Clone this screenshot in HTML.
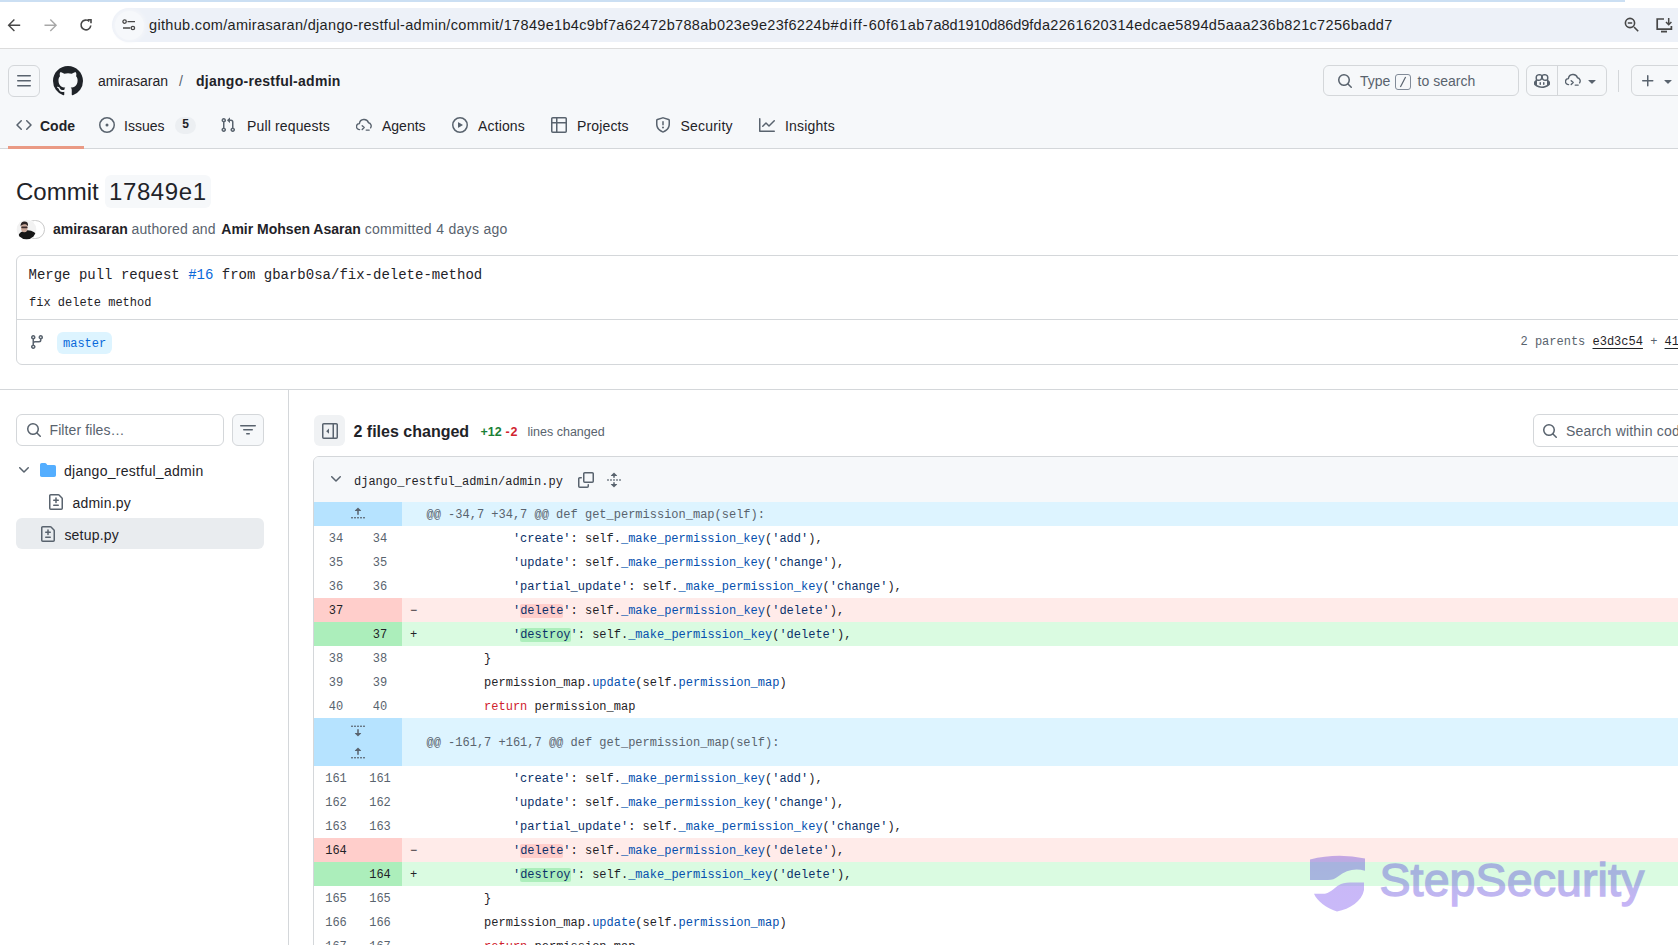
<!DOCTYPE html>
<html><head><meta charset="utf-8">
<style>
*{box-sizing:border-box;margin:0;padding:0}
html,body{width:1678px;height:945px;overflow:hidden;background:#fff;font-family:"Liberation Sans",sans-serif;color:#1f2328;position:relative}
.a{position:absolute;white-space:nowrap}
.mono{font-family:"Liberation Mono",monospace}
svg{display:block;position:absolute}
/* chrome */
#progress{left:0;top:0;width:1625px;height:2px;background:#cbdff3}
#omni{left:112px;top:8px;width:1600px;height:34px;border-radius:17px;background:#edf1f8}
#siteinfo{left:115px;top:10.5px;width:29px;height:29px;border-radius:15px;background:#f6f8fb;box-shadow:0 0 3px 2px #f3f5f9}
#url{left:149px;top:15px;font-size:14.5px;line-height:20px;color:#1f1f1f;letter-spacing:.325px}
#chromesep{left:0;top:48px;width:1678px;height:1px;background:#dcdcdc}
/* github header */
#ghhead{left:0;top:49px;width:1678px;height:100px;background:#f6f8fa;border-bottom:1px solid #d4d7da}
.btn{border:1px solid #d4d7da;border-radius:6px;background:#f6f8fa}
#hamb{left:8px;top:65px;width:32px;height:32px}
#owner{left:98px;top:72px;font-size:14px;line-height:18px;color:#1f2328}
#slash{left:179px;top:72px;font-size:14px;line-height:18px;color:#59636e}
#repo{left:196px;top:72px;font-size:14px;line-height:18px;font-weight:bold;color:#1f2328;letter-spacing:.27px}
.tab{top:117px;font-size:14px;line-height:18px;color:#1f2328}
#tabline{left:8px;top:146px;width:76px;height:2.5px;background:#ea9a84}
#counter{left:175px;top:117px;width:21px;height:17px;border-radius:9px;background:#eceff2;font-size:12px;line-height:14.5px;text-align:center;font-weight:bold;color:#1f2328}
#search{left:1323px;top:65px;width:196px;height:31px;border:1px solid #d4d7da;border-radius:6px;background:#f6f8fa}
#searchtxt{left:1360px;top:72px;font-size:14px;line-height:18px;color:#59636e}
#kbd{left:1395px;top:74px;width:16px;height:16px;border:1px solid #818b98;border-radius:3px}
#copbtn{left:1526px;top:65px;width:81px;height:31px}
#copdiv{left:1557px;top:66px;width:1px;height:29px;background:#d4d7da}
#vdiv{left:1618px;top:70px;width:1px;height:22px;background:#d4d7da}
#plusbtn{left:1631px;top:65px;width:60px;height:31px}
/* commit */
#ctitle{left:16px;top:177px;font-size:24px;line-height:30px;color:#1f2328}
#hashbox{left:105px;top:175px;width:106px;height:33px;border-radius:6px;background:#f6f8fa}
#hash{left:109px;top:177px;font-size:24px;line-height:30px;letter-spacing:.6px;color:#1f2328}
.meta{top:220px;font-size:14px;line-height:18px}
#msgbox{left:16px;top:255px;width:1700px;height:110px;border:1px solid #d4d7da;border-radius:6px}
#msgdiv{left:17px;top:319px;width:1700px;height:1px;background:#d4d7da}
#msg1{left:28.5px;top:266px;font-size:14px;line-height:18px}
#msg2{left:29px;top:294.5px;font-size:12px;line-height:16px}
#master{left:57px;top:332px;width:55px;height:22px;border-radius:6px;background:#ddf4ff}
#mastertxt{left:63px;top:335.5px;font-size:12px;line-height:16px;color:#0969da}
#parents{left:1520.5px;top:334px;font-size:12px;line-height:16px;color:#59636e}
#parents u{color:#1f2328;text-underline-offset:3px}
#sect{left:0;top:389px;width:1678px;height:1px;background:#d4d7da}
#sidediv{left:288px;top:390px;width:1px;height:560px;background:#d4d7da}
/* sidebar */
#filter{left:16px;top:414px;width:208px;height:32px;border:1px solid #d4d7da;border-radius:6px;background:#fff}
#filtertxt{left:49.5px;top:421px;font-size:14px;line-height:18px;color:#59636e;letter-spacing:.1px}
#filterbtn{left:232px;top:414px;width:32px;height:32px}
.tree{font-size:14px;line-height:18px;color:#1f2328}
#selrow{left:16px;top:518px;width:248px;height:31px;border-radius:6px;background:#e9ecef}
/* content */
#sidetoggle{left:314px;top:415px;width:31px;height:31px;border-radius:6px;background:#f0f2f4}
#fc{left:353.5px;top:422px;font-size:16px;line-height:20px;font-weight:bold}
#stats{left:480.5px;top:424px;font-size:12.5px;line-height:16px}
#searchcode{left:1533px;top:414px;width:200px;height:33px;border:1px solid #d4d7da;border-radius:6px}
#searchcodetxt{left:1566px;top:422px;font-size:14px;line-height:18px;color:#59636e;letter-spacing:.2px}
#filebox{left:313px;top:456px;width:1400px;height:600px;border:1px solid #d4d7da;border-radius:6px;overflow:hidden}
#fhead{left:0;top:0;width:1400px;height:46px;background:#f6f8fa;border-bottom:1px solid #d4d7da}
#fname{left:40px;top:17px;font-size:12px;line-height:16px}
/* diff */
#diff{left:0;top:45px;width:1400px}
.r{position:relative;height:24px;font-family:"Liberation Mono",monospace;font-size:12px;line-height:24px;white-space:pre;color:#1f2328}
.r .n1,.r .n2{position:absolute;top:0;width:44px;height:100%;text-align:center;color:#59636e;padding-top:1px}
.r .n1{left:0}.r .n2{left:44px}
.r .s{position:absolute;left:96px;top:1px}
.r .c{position:absolute;left:112.5px;top:1px}
.hk{background:#ddf4ff;color:#59636e}
.hk .n{position:absolute;left:0;top:0;width:88px;height:100%;background:#b6e3ff}
.del{background:#ffebe9}.del .n1,.del .n2{background:#ffcecb;color:#1f2328}
.add{background:#dafbe1}.add .n1,.add .n2{background:#aceebb;color:#1f2328}
.str{color:#0a3069}.fn{color:#0550ae}.kw{color:#cf222e}
.wd{background:#ffcecb;border-radius:2px}
.wa{background:#aceebb;border-radius:2px}
</style></head>
<body>
<!-- browser chrome -->
<div class="a" id="progress"></div>
<div class="a" id="omni"></div>
<svg style="left:7px;top:17.5px" width="15" height="15" viewBox="0 0 15 15"><path d="M13.2 7.2H1.8M7.4 1.4 1.6 7.2l5.8 5.8" fill="none" stroke="#474747" stroke-width="1.4"/></svg>
<svg style="left:42.5px;top:17.5px" width="15" height="15" viewBox="0 0 15 15"><path d="M1.5 7.2h11.4M7.3 1.4l5.8 5.8-5.8 5.8" fill="none" stroke="#a8a8a8" stroke-width="1.4"/></svg>
<svg style="left:79px;top:18px" width="14" height="14" viewBox="0 0 14 14"><path d="M11.8 7.5A4.9 4.9 0 1 1 10.3 3.4" fill="none" stroke="#474747" stroke-width="1.6"/><path d="M8.6 1.8h3.4v3.4" fill="none" stroke="#474747" stroke-width="1.6"/></svg>
<div class="a" id="siteinfo"></div>
<svg style="left:122px;top:19px" width="14" height="12" viewBox="0 0 14 12"><circle cx="2.6" cy="2.6" r="1.7" fill="none" stroke="#474747" stroke-width="1.3"/><path d="M5.5 2.6h7.5M1 9h7.3" stroke="#474747" stroke-width="1.3"/><circle cx="10.9" cy="9" r="1.7" fill="none" stroke="#474747" stroke-width="1.3"/></svg>
<div class="a" id="url">github.com/amirasaran/django-restful-admin/commit/17849e1b4c9bf7a62472b788ab023e9e23f6224b<span style="letter-spacing:1.05px">#diff-</span><span style="letter-spacing:.55px">60f61ab7</span><span style="letter-spacing:-.1px">a8d1910d86d9</span>fda2261620314edcae5894d5aaa236b821c7256badd7</div>
<svg style="left:1624px;top:17px" width="16" height="16" viewBox="0 0 16 16"><circle cx="6" cy="6" r="4.6" fill="none" stroke="#474747" stroke-width="1.6"/><path d="M10 10l4.2 4.2M3.8 6h4.4" stroke="#474747" stroke-width="1.6"/></svg>
<svg style="left:1655px;top:17px" width="18" height="16" viewBox="0 0 18 16"><path d="M9 2H2.2v10.2h14.2V9" fill="none" stroke="#474747" stroke-width="1.7"/><path d="M6 14.6h6" stroke="#474747" stroke-width="1.8"/><path d="M13.7 1v6.5M11 5l2.7 2.7L16.4 5" fill="none" stroke="#474747" stroke-width="1.5"/></svg>
<div class="a" id="chromesep"></div>

<!-- github header -->
<div class="a" id="ghhead"></div>
<div class="a btn" id="hamb"></div>
<svg style="left:16px;top:73px" width="16" height="16" viewBox="0 0 16 16" fill="#59636e"><path d="M1 2.75A.75.75 0 0 1 1.75 2h12.5a.75.75 0 0 1 0 1.5H1.75A.75.75 0 0 1 1 2.75Zm0 5A.75.75 0 0 1 1.75 7h12.5a.75.75 0 0 1 0 1.5H1.75A.75.75 0 0 1 1 7.75ZM1.75 12h12.5a.75.75 0 0 1 0 1.5H1.75a.75.75 0 0 1 0-1.5Z"/></svg>
<svg style="left:53px;top:66px" width="30" height="30" viewBox="0 0 16 16" fill="#1f2328"><path d="M8 0c4.42 0 8 3.58 8 8a8.013 8.013 0 0 1-5.45 7.59c-.4.08-.55-.17-.55-.38 0-.27.01-1.13.01-2.2 0-.75-.25-1.23-.54-1.48 1.78-.2 3.65-.88 3.65-3.95 0-.88-.31-1.59-.82-2.15.08-.2.36-1.02-.08-2.12 0 0-.67-.22-2.2.82-.64-.18-1.32-.27-2-.27-.68 0-1.36.09-2 .27-1.53-1.03-2.2-.82-2.2-.82-.44 1.1-.16 1.92-.08 2.12-.51.56-.82 1.28-.82 2.15 0 3.06 1.86 3.75 3.64 3.950-.23.2-.44.55-.51 1.07-.46.21-1.61.55-2.330-.66-.15-.24-.6-.83-1.23-.82-.67.01-.27.38.01.53.34.19.73.9.82 1.13.16.45.68 1.31 2.69.94 0 .67.01 1.3.01 1.49 0 .21-.15.45-.55.38A7.995 7.995 0 0 1 0 8c0-4.42 3.58-8 8-8Z"/></svg>
<div class="a" id="owner">amirasaran</div>
<div class="a" id="slash">/</div>
<div class="a" id="repo">django-restful-admin</div>

<svg style="left:16px;top:117px" width="16" height="16" viewBox="0 0 16 16" fill="#59636e"><path d="m11.28 3.22 4.25 4.25a.75.75 0 0 1 0 1.060l-4.25 4.25a.749.749 0 0 1-1.275-.326.749.749 0 0 1 .215-.734L13.94 8l-3.72-3.72a.749.749 0 0 1 .326-1.275.749.749 0 0 1 .734.215Zm-6.56 0a.751.751 0 0 1 1.042.018.751.751 0 0 1 .018 1.042L2.06 8l3.72 3.72a.749.749 0 0 1-.326 1.275.749.749 0 0 1-.734-.215L.47 8.53a.75.75 0 0 1 0-1.06Z"/></svg>
<div class="a tab" id="t_code" style="left:40px;font-weight:bold">Code</div>
<svg style="left:99px;top:117px" width="16" height="16" viewBox="0 0 16 16" fill="#59636e"><path d="M8 9.5a1.5 1.5 0 1 0 0-3 1.5 1.5 0 0 0 0 3Z"/><path d="M8 0a8 8 0 1 1 0 16A8 8 0 0 1 8 0ZM1.5 8a6.5 6.5 0 1 0 13 0 6.5 6.5 0 0 0-13 0Z"/></svg>
<div class="a tab" id="t_issues" style="left:124px">Issues</div>
<div class="a" id="counter">5</div>
<svg style="left:220px;top:117px" width="16" height="16" viewBox="0 0 16 16" fill="#59636e"><path d="M1.5 3.25a2.25 2.25 0 1 1 3 2.122v5.256a2.251 2.251 0 1 1-1.5 0V5.372A2.25 2.25 0 0 1 1.5 3.25Zm5.677-.177L9.573.677A.25.25 0 0 1 10 .854V2.5h1A2.5 2.5 0 0 1 13.5 5v5.628a2.251 2.251 0 1 1-1.5 0V5a1 1 0 0 0-1-1h-1v1.646a.25.25 0 0 1-.427.177L7.177 3.427a.25.25 0 0 1 0-.354ZM3.75 2.5a.75.75 0 1 0 0 1.5.75.75 0 0 0 0-1.5Zm0 9.5a.75.75 0 1 0 0 1.5.75.75 0 0 0 0-1.5Zm8.25.75a.75.75 0 1 0 1.5 0 .75.75 0 0 0-1.5 0Z"/></svg>
<div class="a tab" id="t_pr" style="left:247px;letter-spacing:.15px">Pull requests</div>
<svg style="left:356px;top:117px" width="16" height="16" viewBox="0 0 16 16" fill="none" stroke="#59636e" stroke-width="1.4" stroke-linecap="round" stroke-linejoin="round"><path d="M3.6 12.6A3 3 0 0 1 3.4 6.6 4.7 4.7 0 0 1 12.5 5.7 3.3 3.3 0 0 1 14.6 10.8"/><path d="M6.2 8.7l2 1.9-2 1.9M10.2 13.1h3"/></svg>
<div class="a tab" id="t_agents" style="left:382px">Agents</div>
<svg style="left:452px;top:117px" width="16" height="16" viewBox="0 0 16 16" fill="#59636e"><path d="M8 0a8 8 0 1 1 0 16A8 8 0 0 1 8 0ZM1.5 8a6.5 6.5 0 1 0 13 0 6.5 6.5 0 0 0-13 0Zm4.879-2.773 4.264 2.559a.25.25 0 0 1 0 .428l-4.264 2.559A.25.25 0 0 1 6 10.559V5.442a.25.25 0 0 1 .379-.215Z"/></svg>
<div class="a tab" id="t_actions" style="left:478px;letter-spacing:.15px">Actions</div>
<svg style="left:551px;top:117px" width="16" height="16" viewBox="0 0 16 16" fill="#59636e"><path d="M0 1.75C0 .784.784 0 1.75 0h12.5C15.216 0 16 .784 16 1.75v12.5A1.75 1.75 0 0 1 14.25 16H1.75A1.75 1.75 0 0 1 0 14.25ZM6.5 6.5v8h7.75a.25.25 0 0 0 .25-.25V6.5Zm8-1.5V1.75a.25.25 0 0 0-.25-.25H6.5V5Zm-13 1.5v7.75c0 .138.112.25.25.25H5v-8ZM5 5V1.5H1.75a.25.25 0 0 0-.25.25V5Z"/></svg>
<div class="a tab" id="t_projects" style="left:577px;letter-spacing:.15px">Projects</div>
<svg style="left:655px;top:117px" width="16" height="16" viewBox="0 0 16 16" fill="#59636e"><path d="M7.467.133a1.748 1.748 0 0 1 1.066 0l5.25 1.68A1.75 1.75 0 0 1 15 3.48V7c0 1.566-.32 3.182-1.303 4.682-.983 1.498-2.585 2.813-5.032 3.855a1.697 1.697 0 0 1-1.33 0c-2.447-1.042-4.049-2.357-5.032-3.855C1.32 10.182 1 8.566 1 7V3.48a1.755 1.755 0 0 1 1.217-1.667Zm.61 1.429a.25.25 0 0 0-.153 0l-5.25 1.68a.25.25 0 0 0-.174.238V7c0 1.358.275 2.666 1.057 3.86.784 1.194 2.121 2.340 4.366 3.297a.196.196 0 0 0 .154 0c2.245-.956 3.582-2.104 4.366-3.298C13.225 9.666 13.5 8.360 13.5 7V3.48a.251.251 0 0 0-.174-.237l-5.25-1.68ZM8.75 4.75v3a.75.75 0 0 1-1.5 0v-3a.75.75 0 0 1 1.5 0ZM9 10.5a1 1 0 1 1-2 0 1 1 0 0 1 2 0Z"/></svg>
<div class="a tab" id="t_security" style="left:680.5px;letter-spacing:.2px">Security</div>
<svg style="left:759px;top:117px" width="16" height="16" viewBox="0 0 16 16" fill="#59636e"><path d="M1.5 1.75V13.5h13.75a.75.75 0 0 1 0 1.5H.75a.75.75 0 0 1-.75-.75V1.75a.75.75 0 0 1 1.5 0Zm14.28 2.53-5.25 5.25a.75.75 0 0 1-1.06 0L7 7.060 4.280 9.780a.751.751 0 0 1-1.042-.018.751.751 0 0 1-.018-1.042l3.25-3.25a.75.75 0 0 1 1.06 0L10 7.94l4.72-4.72a.751.751 0 0 1 1.042.018.751.751 0 0 1 .018 1.042Z"/></svg>
<div class="a tab" id="t_insights" style="left:785px;letter-spacing:.2px">Insights</div>
<div class="a" id="tabline"></div>

<div class="a" id="search"></div>
<svg style="left:1337px;top:73px" width="16" height="16" viewBox="0 0 16 16" fill="#59636e"><path d="M10.68 11.74a6 6 0 0 1-7.922-8.982 6 6 0 0 1 8.982 7.922l3.04 3.04a.749.749 0 0 1-.326 1.275.749.749 0 0 1-.734-.215ZM11.5 7a4.499 4.499 0 1 0-8.997 0A4.499 4.499 0 0 0 11.5 7Z"/></svg>
<div class="a" id="searchtxt">Type&nbsp;&nbsp;&nbsp;&nbsp;&nbsp;&nbsp; to search</div>
<div class="a" id="kbd"></div>
<svg style="left:1396px;top:75px" width="14" height="14" viewBox="0 0 14 14"><path d="M9.6 2 4.4 12" stroke="#59636e" stroke-width="1.2"/></svg>
<div class="a btn" id="copbtn"></div>
<div class="a" id="copdiv"></div>
<svg style="left:1534px;top:73px" width="16" height="16" viewBox="0 0 16 16" fill="#59636e"><path d="M7.998 15.035c-4.562 0-7.873-2.914-7.998-3.749V9.338c.085-.628.677-1.686 1.588-2.065.013-.07.024-.143.036-.218.029-.183.06-.384.126-.612-.201-.508-.254-1.084-.254-1.656 0-.87.128-1.769.693-2.484.579-.733 1.494-1.124 2.724-1.261 1.206-.134 2.262.034 2.944.765.05.053.096.108.139.165.044-.057.094-.112.143-.165.682-.731 1.738-.899 2.944-.765 1.23.137 2.145.528 2.724 1.261.566.715.693 1.614.693 2.484 0 .572-.053 1.148-.254 1.656.066.228.098.429.126.612.012.076.024.148.037.218.924.385 1.522 1.471 1.591 2.095v1.872c0 .766-3.351 3.795-8.002 3.795Zm0-1.485c2.28 0 4.584-1.11 5.002-1.433V7.862l-.023-.116c-.49.21-1.075.291-1.727.291-1.146 0-2.059-.327-2.71-.991A3.222 3.222 0 0 1 8 6.303a3.24 3.24 0 0 1-.544.743c-.65.664-1.563.991-2.71.991-.652 0-1.236-.081-1.727-.291l-.023.116v4.255c.419.323 2.722 1.433 5.002 1.433ZM6.762 2.83c-.193-.206-.637-.413-1.682-.297-1.019.113-1.479.404-1.713.7-.247.312-.369.789-.369 1.554 0 .793.129 1.171.308 1.371.162.181.519.379 1.442.379.853 0 1.339-.235 1.638-.54.315-.322.527-.827.617-1.553.117-.935-.037-1.395-.241-1.614Zm4.155-.297c-1.044-.116-1.488.091-1.681.297-.204.219-.359.679-.242 1.614.091.726.303 1.231.618 1.553.299.305.784.54 1.638.54.922 0 1.28-.198 1.442-.379.179-.2.308-.578.308-1.371 0-.765-.123-1.242-.37-1.554-.233-.296-.693-.587-1.713-.7Z"/><path d="M6.25 9.037a.75.75 0 0 1 .75.75v1.501a.75.75 0 0 1-1.5 0V9.787a.75.75 0 0 1 .75-.75Zm4.25.75v1.501a.75.75 0 0 1-1.5 0V9.787a.75.75 0 0 1 1.5 0Z"/></svg>
<svg style="left:1565px;top:72px" width="16" height="16" viewBox="0 0 16 16" fill="none" stroke="#59636e" stroke-width="1.4" stroke-linecap="round" stroke-linejoin="round"><path d="M3.6 12.6A3 3 0 0 1 3.4 6.6 4.7 4.7 0 0 1 12.5 5.7 3.3 3.3 0 0 1 14.6 10.8"/><path d="M6.2 8.7l2 1.9-2 1.9M10.2 13.1h3"/></svg>
<svg style="left:1584px;top:73px" width="16" height="16" viewBox="0 0 16 16" fill="#59636e"><path d="m4.427 7.427 3.396 3.396a.25.25 0 0 0 .354 0l3.396-3.396A.25.25 0 0 0 11.396 7H4.604a.25.25 0 0 0-.177.427Z"/></svg>
<div class="a" id="vdiv"></div>
<div class="a btn" id="plusbtn"></div>
<svg style="left:1640px;top:73px" width="16" height="16" viewBox="0 0 16 16" fill="#59636e"><path d="M7.75 2a.75.75 0 0 1 .75.75V7h4.25a.75.75 0 0 1 0 1.5H8.5v4.25a.75.75 0 0 1-1.5 0V8.5H2.75a.75.75 0 0 1 0-1.5H7V2.75A.75.75 0 0 1 7.75 2Z"/></svg>
<svg style="left:1660px;top:73px" width="16" height="16" viewBox="0 0 16 16" fill="#59636e"><path d="m4.427 7.427 3.396 3.396a.25.25 0 0 0 .354 0l3.396-3.396A.25.25 0 0 0 11.396 7H4.604a.25.25 0 0 0-.177.427Z"/></svg>

<!-- commit header -->
<div class="a" id="hashbox"></div>
<div class="a" id="ctitle">Commit</div>
<div class="a" id="hash">17849e1</div>
<div class="a" style="left:25px;top:219.5px;width:19.5px;height:19.5px;border-radius:50%;background:#fff;border:1.6px solid #c9c9c9"></div>
<svg style="left:15.5px;top:219px" width="21" height="21" viewBox="0 0 21 21"><defs><clipPath id="av"><circle cx="10.5" cy="10.5" r="9.8"/></clipPath></defs><circle cx="10.5" cy="10.5" r="10.3" fill="#fff"/><g clip-path="url(#av)"><rect width="21" height="21" fill="#f2f2f2"/><ellipse cx="11.5" cy="18" rx="9.5" ry="6.8" fill="#161616"/><ellipse cx="8.3" cy="9" rx="3.3" ry="4.2" fill="#c9a89a"/><path d="M4.6 7.5C4.4 3.8 6.5 2.6 8.6 2.6 11 2.6 12.4 4 12 7.2 11 5.6 9.6 5 8.2 5.2 6.6 5.4 5.4 6 4.6 7.5Z" fill="#2a2222"/><rect x="5.3" y="7.4" width="6.2" height="1.8" rx=".8" fill="#3a2a2a"/></g></svg>
<div class="a meta" style="left:53px;font-weight:bold">amirasaran</div>
<div class="a meta" style="left:131.5px;color:#59636e;letter-spacing:.14px">authored and</div>
<div class="a meta" style="left:221.3px;font-weight:bold">Amir Mohsen Asaran</div>
<div class="a meta" style="left:364.7px;color:#59636e;letter-spacing:.3px">committed 4 days ago</div>

<div class="a" id="msgbox"></div>
<div class="a" id="msgdiv"></div>
<div class="a mono" id="msg1">Merge pull request <span style="color:#0969da">#16</span> from gbarb0sa/fix-delete-method</div>
<div class="a mono" id="msg2">fix delete method</div>
<svg style="left:29px;top:334px" width="16" height="16" viewBox="0 0 16 16" fill="#59636e"><path d="M9.5 3.25a2.25 2.25 0 1 1 3 2.122V6A2.5 2.5 0 0 1 10 8.5H6a1 1 0 0 0-1 1v1.128a2.251 2.251 0 1 1-1.5 0V5.372a2.25 2.25 0 1 1 1.5 0v1.836A2.493 2.493 0 0 1 6 7h4a1 1 0 0 0 1-1v-.628A2.25 2.25 0 0 1 9.5 3.25Zm-6 0a.75.75 0 1 0 1.5 0 .75.75 0 0 0-1.5 0Zm8.25-.75a.75.75 0 1 0 0 1.5.75.75 0 0 0 0-1.5ZM4.25 12a.75.75 0 1 0 0 1.5.75.75 0 0 0 0-1.5Z"/></svg>
<div class="a" id="master"></div>
<div class="a mono" id="mastertxt">master</div>
<div class="a mono" id="parents">2 parents <u>e3d3c54</u> + <u>41</u></div>
<div class="a" id="sect"></div>
<div class="a" id="sidediv"></div>

<!-- sidebar -->
<div class="a" id="filter"></div>
<svg style="left:26px;top:422px" width="16" height="16" viewBox="0 0 16 16" fill="#59636e"><path d="M10.68 11.74a6 6 0 0 1-7.922-8.982 6 6 0 0 1 8.982 7.922l3.04 3.04a.749.749 0 0 1-.326 1.275.749.749 0 0 1-.734-.215ZM11.5 7a4.499 4.499 0 1 0-8.997 0A4.499 4.499 0 0 0 11.5 7Z"/></svg>
<div class="a" id="filtertxt">Filter files…</div>
<div class="a btn" id="filterbtn"></div>
<svg style="left:240px;top:422px" width="16" height="16" viewBox="0 0 16 16" fill="#59636e"><path d="M.75 3h14.5a.75.75 0 0 1 0 1.5H.75a.75.75 0 0 1 0-1.5ZM3 7.75A.75.75 0 0 1 3.75 7h8.5a.75.75 0 0 1 0 1.5h-8.5A.75.75 0 0 1 3 7.75Zm3 4a.75.75 0 0 1 .75-.75h2.5a.75.75 0 0 1 0 1.5h-2.5a.75.75 0 0 1-.75-.75Z"/></svg>
<svg style="left:16px;top:462px" width="16" height="16" viewBox="0 0 16 16" fill="#59636e"><path d="M12.78 5.22a.749.749 0 0 1 0 1.060l-4.25 4.25a.749.749 0 0 1-1.060 0L3.220 6.280a.749.749 0 0 1 .326-1.275.749.749 0 0 1 .734.215L8 8.940l3.720-3.720a.749.749 0 0 1 1.060 0Z"/></svg>
<svg style="left:40px;top:462px" width="16" height="16" viewBox="0 0 16 16" fill="#54aeff"><path d="M1.75 1A1.75 1.75 0 0 0 0 2.75v10.5C0 14.216.784 15 1.75 15h12.5A1.75 1.75 0 0 0 16 13.250v-8.5A1.75 1.75 0 0 0 14.25 3H7.5a.25.25 0 0 1-.2-.1l-.9-1.2C6.07 1.26 5.55 1 5 1H1.75Z"/></svg>
<div class="a tree" style="left:64px;top:462px;letter-spacing:.28px">django_restful_admin</div>
<svg style="left:48px;top:494px" width="16" height="16" viewBox="0 0 16 16" fill="#59636e"><path d="M1 1.75C1 .784 1.784 0 2.75 0h7.586c.464 0 .909.184 1.237.513l2.914 2.914c.329.328.513.773.513 1.237v9.586A1.75 1.75 0 0 1 13.25 16H2.75A1.75 1.75 0 0 1 1 14.25Zm1.75-.25a.25.25 0 0 0-.25.25v12.5c0 .138.112.25.25.25h10.5a.25.25 0 0 0 .25-.25V4.664a.25.25 0 0 0-.073-.177l-2.914-2.914a.25.25 0 0 0-.177-.073ZM8 3.25a.75.75 0 0 1 .75.75v1.5h1.5a.75.75 0 0 1 0 1.5h-1.5v1.5a.75.75 0 0 1-1.5 0V7h-1.5a.75.75 0 0 1 0-1.5h1.5V4A.75.75 0 0 1 8 3.25Zm-3 8a.75.75 0 0 1 .75-.75h4.5a.75.75 0 0 1 0 1.5h-4.5a.75.75 0 0 1-.75-.75Z"/></svg>
<div class="a tree" style="left:72.5px;top:493.5px;letter-spacing:.2px">admin.py</div>
<div class="a" id="selrow"></div>
<svg style="left:40px;top:526px" width="16" height="16" viewBox="0 0 16 16" fill="#59636e"><path d="M1 1.75C1 .784 1.784 0 2.75 0h7.586c.464 0 .909.184 1.237.513l2.914 2.914c.329.328.513.773.513 1.237v9.586A1.75 1.75 0 0 1 13.25 16H2.75A1.75 1.75 0 0 1 1 14.25Zm1.75-.25a.25.25 0 0 0-.25.25v12.5c0 .138.112.25.25.25h10.5a.25.25 0 0 0 .25-.25V4.664a.25.25 0 0 0-.073-.177l-2.914-2.914a.25.25 0 0 0-.177-.073ZM8 3.25a.75.75 0 0 1 .75.75v1.5h1.5a.75.75 0 0 1 0 1.5h-1.5v1.5a.75.75 0 0 1-1.5 0V7h-1.5a.75.75 0 0 1 0-1.5h1.5V4A.75.75 0 0 1 8 3.25Zm-3 8a.75.75 0 0 1 .75-.75h4.5a.75.75 0 0 1 0 1.5h-4.5a.75.75 0 0 1-.75-.75Z"/></svg>
<div class="a tree" style="left:64.4px;top:525.5px;letter-spacing:.2px">setup.py</div>

<!-- content header -->
<div class="a" id="sidetoggle"></div>
<svg style="left:321.5px;top:423px" width="16" height="16" viewBox="0 0 16 16" fill="#59636e"><path d="M1.75 0h12.5C15.216 0 16 .784 16 1.75v12.5A1.75 1.75 0 0 1 14.25 16H1.75A1.75 1.75 0 0 1 0 14.25V1.75C0 .784.784 0 1.75 0ZM1.5 1.75v12.5c0 .138.112.25.25.25H10.5v-13H1.75a.25.25 0 0 0-.25.25ZM12 14.5h2.25a.25.25 0 0 0 .25-.25V1.75a.25.25 0 0 0-.25-.25H12Z"/><path d="M4.2 8.2 7 5.6v5.2Z"/></svg>
<div class="a" id="fc">2 files changed</div>
<div class="a" id="stats"><b style="color:#1a7f37">+12</b></div><div class="a" id="stats2" style="left:505.5px;top:424px;font-size:12.5px;line-height:16px;font-weight:bold;color:#d1242f;letter-spacing:.8px">-2</div><div class="a" id="stats3" style="left:527.5px;top:424px;font-size:12.5px;line-height:16px;color:#59636e">lines changed</div>
<div class="a" id="searchcode"></div>
<svg style="left:1542px;top:423px" width="16" height="16" viewBox="0 0 16 16" fill="#59636e"><path d="M10.68 11.74a6 6 0 0 1-7.922-8.982 6 6 0 0 1 8.982 7.922l3.04 3.04a.749.749 0 0 1-.326 1.275.749.749 0 0 1-.734-.215ZM11.5 7a4.499 4.499 0 1 0-8.997 0A4.499 4.499 0 0 0 11.5 7Z"/></svg>
<div class="a" id="searchcodetxt">Search within code</div>

<!-- file diff -->
<div class="a" id="filebox">
  <div class="a" id="fhead"></div>
  <svg style="left:14px;top:14px" width="16" height="16" viewBox="0 0 16 16" fill="#59636e"><path d="M12.78 5.22a.749.749 0 0 1 0 1.060l-4.25 4.25a.749.749 0 0 1-1.060 0L3.220 6.280a.749.749 0 0 1 .326-1.275.749.749 0 0 1 .734.215L8 8.940l3.720-3.720a.749.749 0 0 1 1.060 0Z"/></svg>
  <div class="a mono" id="fname">django_restful_admin/admin.py</div>
  <svg style="left:264px;top:14.5px" width="16" height="16" viewBox="0 0 16 16" fill="#59636e"><path d="M0 6.75C0 5.784.784 5 1.75 5h1.5a.75.75 0 0 1 0 1.5h-1.5a.25.25 0 0 0-.25.25v7.5c0 .138.112.25.25.25h7.5a.25.25 0 0 0 .25-.25v-1.5a.75.75 0 0 1 1.5 0v1.5A1.75 1.75 0 0 1 9.25 16h-7.5A1.75 1.75 0 0 1 0 14.25Z"/><path d="M5 1.75C5 .784 5.784 0 6.75 0h7.5C15.216 0 16 .784 16 1.75v7.5A1.75 1.75 0 0 1 14.25 11h-7.5A1.75 1.75 0 0 1 5 9.25Zm1.75-.25a.25.25 0 0 0-.25.25v7.5c0 .138.112.25.25.25h7.5a.25.25 0 0 0 .25-.25v-7.5a.25.25 0 0 0-.25-.25Z"/></svg>
  <svg style="left:292px;top:14.5px" width="16" height="16" viewBox="0 0 16 16" fill="#59636e"><path d="m8.177.677 2.896 2.896a.25.25 0 0 1-.177.427H8.75v1.25a.75.75 0 0 1-1.5 0V4H5.104a.25.25 0 0 1-.177-.427L7.823.677a.25.25 0 0 1 .354 0ZM7.25 10.75a.75.75 0 0 1 1.5 0V12h2.146a.25.25 0 0 1 .177.427l-2.896 2.896a.25.25 0 0 1-.354 0l-2.896-2.896A.25.25 0 0 1 5.104 12H7.25v-1.25Zm-5-2a.75.75 0 0 0 0-1.5h-.5a.75.75 0 0 0 0 1.5h.5ZM6 8a.75.75 0 0 1-.75.75h-.5a.75.75 0 0 1 0-1.5h.5A.75.75 0 0 1 6 8Zm2.25.75a.75.75 0 0 0 0-1.5h-.5a.75.75 0 0 0 0 1.5h.5ZM12 8a.75.75 0 0 1-.75.75h-.5a.75.75 0 0 1 0-1.5h.5A.75.75 0 0 1 12 8Zm2.25.75a.75.75 0 0 0 0-1.5h-.5a.75.75 0 0 0 0 1.5h.5Z"/></svg>
  <div class="a" id="diff">
<div class="r hk" style="height:24px;line-height:24px"><span class="n"></span><svg style="left:36px;top:4px" width="16" height="16" viewBox="0 0 16 16" fill="#59636e"><path d="M7.823 1.677 4.927 4.573A.25.25 0 0 0 5.104 5H7.25v3.236a.75.75 0 1 0 1.5 0V5h2.146a.25.25 0 0 0 .177-.427L8.177 1.677a.25.25 0 0 0-.354 0ZM13.75 11a.75.75 0 0 0 0 1.5h.5a.75.75 0 0 0 0-1.5h-.5Zm-3.75.75a.75.75 0 0 1 .75-.75h.5a.75.75 0 0 1 0 1.5h-.5a.75.75 0 0 1-.75-.75ZM7.75 11a.75.75 0 0 0 0 1.5h.5a.75.75 0 0 0 0-1.5h-.5ZM4 11.75a.75.75 0 0 1 .75-.75h.5a.75.75 0 0 1 0 1.5h-.5a.75.75 0 0 1-.75-.75ZM1.75 11a.75.75 0 0 0 0 1.5h.5a.75.75 0 0 0 0-1.5h-.5Z"/></svg><span class="c">@@ -34,7 +34,7 @@ def get_permission_map(self):</span></div>
<div class="r "><span class="n1">34</span><span class="n2">34</span><span class="s"></span><span class="c">            <span class="str">'create'</span>: self.<span class="fn">_make_permission_key</span>(<span class="str">'add'</span>),</span></div>
<div class="r "><span class="n1">35</span><span class="n2">35</span><span class="s"></span><span class="c">            <span class="str">'update'</span>: self.<span class="fn">_make_permission_key</span>(<span class="str">'change'</span>),</span></div>
<div class="r "><span class="n1">36</span><span class="n2">36</span><span class="s"></span><span class="c">            <span class="str">'partial_update'</span>: self.<span class="fn">_make_permission_key</span>(<span class="str">'change'</span>),</span></div>
<div class="r del"><span class="n1">37</span><span class="n2"></span><span class="s">&#8722;</span><span class="c">            <span class="str">'</span><span class="str wd">delete</span><span class="str">'</span>: self.<span class="fn">_make_permission_key</span>(<span class="str">'delete'</span>),</span></div>
<div class="r add"><span class="n1"></span><span class="n2">37</span><span class="s">+</span><span class="c">            <span class="str">'</span><span class="str wa">destroy</span><span class="str">'</span>: self.<span class="fn">_make_permission_key</span>(<span class="str">'delete'</span>),</span></div>
<div class="r "><span class="n1">38</span><span class="n2">38</span><span class="s"></span><span class="c">        }</span></div>
<div class="r "><span class="n1">39</span><span class="n2">39</span><span class="s"></span><span class="c">        permission_map.<span class="fn">update</span>(self.<span class="fn">permission_map</span>)</span></div>
<div class="r "><span class="n1">40</span><span class="n2">40</span><span class="s"></span><span class="c">        <span class="kw">return</span> permission_map</span></div>
<div class="r hk" style="height:48px;line-height:48px"><span class="n"></span><svg style="left:36px;top:4px" width="16" height="16" viewBox="0 0 16 16" fill="#59636e"><path d="m8.177 14.323 2.896-2.896a.25.25 0 0 0-.177-.427H8.75V7.764a.75.75 0 1 0-1.5 0V11H5.104a.25.25 0 0 0-.177.427l2.896 2.896a.25.25 0 0 0 .354 0ZM2.25 5a.75.75 0 0 0 0-1.5h-.5a.75.75 0 0 0 0 1.5h.5ZM6 4.25a.75.75 0 0 1-.75.75h-.5a.75.75 0 0 1 0-1.5h.5a.75.75 0 0 1 .75.75ZM8.25 5a.75.75 0 0 0 0-1.5h-.5a.75.75 0 0 0 0 1.5h.5ZM12 4.25a.75.75 0 0 1-.75.75h-.5a.75.75 0 0 1 0-1.5h.5a.75.75 0 0 1 .75.75Zm2.25.75a.75.75 0 0 0 0-1.5h-.5a.75.75 0 0 0 0 1.5h.5Z"/></svg><svg style="left:36px;top:28px" width="16" height="16" viewBox="0 0 16 16" fill="#59636e"><path d="M7.823 1.677 4.927 4.573A.25.25 0 0 0 5.104 5H7.25v3.236a.75.75 0 1 0 1.5 0V5h2.146a.25.25 0 0 0 .177-.427L8.177 1.677a.25.25 0 0 0-.354 0ZM13.75 11a.75.75 0 0 0 0 1.5h.5a.75.75 0 0 0 0-1.5h-.5Zm-3.75.75a.75.75 0 0 1 .75-.75h.5a.75.75 0 0 1 0 1.5h-.5a.75.75 0 0 1-.75-.75ZM7.75 11a.75.75 0 0 0 0 1.5h.5a.75.75 0 0 0 0-1.5h-.5ZM4 11.75a.75.75 0 0 1 .75-.75h.5a.75.75 0 0 1 0 1.5h-.5a.75.75 0 0 1-.75-.75ZM1.75 11a.75.75 0 0 0 0 1.5h.5a.75.75 0 0 0 0-1.5h-.5Z"/></svg><span class="c">@@ -161,7 +161,7 @@ def get_permission_map(self):</span></div>
<div class="r "><span class="n1">161</span><span class="n2">161</span><span class="s"></span><span class="c">            <span class="str">'create'</span>: self.<span class="fn">_make_permission_key</span>(<span class="str">'add'</span>),</span></div>
<div class="r "><span class="n1">162</span><span class="n2">162</span><span class="s"></span><span class="c">            <span class="str">'update'</span>: self.<span class="fn">_make_permission_key</span>(<span class="str">'change'</span>),</span></div>
<div class="r "><span class="n1">163</span><span class="n2">163</span><span class="s"></span><span class="c">            <span class="str">'partial_update'</span>: self.<span class="fn">_make_permission_key</span>(<span class="str">'change'</span>),</span></div>
<div class="r del"><span class="n1">164</span><span class="n2"></span><span class="s">&#8722;</span><span class="c">            <span class="str">'</span><span class="str wd">delete</span><span class="str">'</span>: self.<span class="fn">_make_permission_key</span>(<span class="str">'delete'</span>),</span></div>
<div class="r add"><span class="n1"></span><span class="n2">164</span><span class="s">+</span><span class="c">            <span class="str">'</span><span class="str wa">destroy</span><span class="str">'</span>: self.<span class="fn">_make_permission_key</span>(<span class="str">'delete'</span>),</span></div>
<div class="r "><span class="n1">165</span><span class="n2">165</span><span class="s"></span><span class="c">        }</span></div>
<div class="r "><span class="n1">166</span><span class="n2">166</span><span class="s"></span><span class="c">        permission_map.<span class="fn">update</span>(self.<span class="fn">permission_map</span>)</span></div>
<div class="r "><span class="n1">167</span><span class="n2">167</span><span class="s"></span><span class="c">        <span class="kw">return</span> permission_map</span></div>
  </div>
</div>

<!-- watermark -->
<svg style="left:1300px;top:845px" width="360" height="70" viewBox="0 0 360 70">
<defs>
<linearGradient id="wg" x1="0" y1="0" x2="0" y2="1"><stop offset="0" stop-color="#7d74dc"/><stop offset="0.55" stop-color="#7f7ddc"/><stop offset="1" stop-color="#9a78f0"/></linearGradient>
<linearGradient id="wg2" x1="0" y1="0" x2="0" y2="1"><stop offset="0" stop-color="#9a6fe0"/><stop offset="0.3" stop-color="#7e79dc"/><stop offset="1" stop-color="#7f7ddc"/></linearGradient>
<linearGradient id="wg3" x1="0" y1="0" x2="0" y2="1"><stop offset="0" stop-color="#9d7ff2"/><stop offset="1" stop-color="#9e80f4"/></linearGradient>
</defs>
<g opacity="0.55">
<path d="M10 14.5Q37.5 7.5 65 13.5L65 25.7C55 23 46 25 38 31.5C35 34 32 35 28 35L10 35Z" fill="url(#wg2)"/>
<path d="M64 37.5L64 45C62 56 50 64 37 66.5C26 63 17 56 14 48.8L25 48.8C32 47 36 41 41 39C46 37 52 37.5 64 37.5Z" fill="url(#wg3)"/>
<text x="79.5" y="51" font-family="Liberation Sans" font-size="46.5" letter-spacing="0.1" fill="url(#wg)" stroke="url(#wg)" stroke-width="1.4">StepSecurity</text>
</g>
</svg>

</body></html>
